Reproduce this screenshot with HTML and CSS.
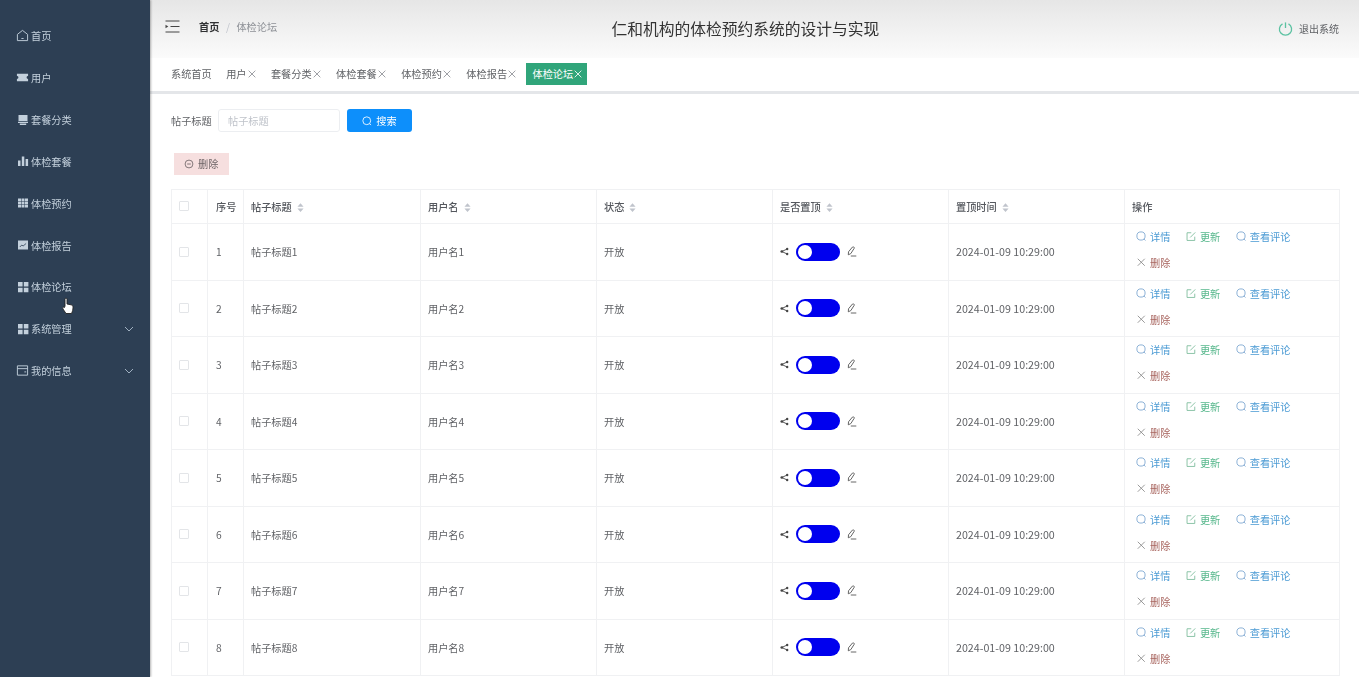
FILE: index.html
```html
<!DOCTYPE html>
<html lang="zh-CN">
<head>
<meta charset="utf-8">
<title>仁和机构的体检预约系统的设计与实现</title>
<link rel="stylesheet" href="styles.css">
</head>
<body>
<svg class="defs" aria-hidden="true">
<symbol id="i-search" viewBox="0 0 12 12"><circle cx="5.7" cy="5.7" r="4.700" fill="none" stroke="currentColor"/><path d="M9 9.100l1.800 1.800" stroke="currentColor" fill="none"/></symbol>
<symbol id="i-edit" viewBox="0 0 12 12"><path d="M10 6.500v4.300H1.200V2H6" fill="none" stroke="currentColor"/><path d="M4.800 7.400L10.600 1.600" stroke="currentColor" fill="none"/></symbol>
<symbol id="i-x" viewBox="0 0 12 12"><path d="M2 2l8 8M10 2l-8 8" stroke="currentColor" fill="none"/></symbol>
<symbol id="i-sort" viewBox="0 0 8 10"><path d="M4 0l3.500 4H.5zM4 10L.5 6h7z" fill="currentColor"/></symbol>
<symbol id="i-share" viewBox="0 0 10 10"><circle cx="2" cy="5" r="1.500" fill="currentColor"/><circle cx="8" cy="2.200" r="1.300" fill="currentColor"/><circle cx="8" cy="7.800" r="1.300" fill="currentColor"/><path d="M2 5l6-2.800M2 5l6 2.800" stroke="currentColor" fill="none"/></symbol>
<symbol id="i-pen" viewBox="0 0 10 11"><path d="M1.300 8.800l.2-3L5.500 1c.7-.7 2.200.4 1.700 1.300L3.800 7.600zM3.800 10h5.500" fill="none" stroke="currentColor" stroke-width=".9"/></symbol>
<symbol id="i-chev" viewBox="0 0 10 10"><path d="M1 3l4 4 4-4" fill="none" stroke="currentColor"/></symbol>
<symbol id="i-four" viewBox="0 0 12 12"><path d="M1 1h4.600v4.500H1zM6.800 1h4.600v4.500H6.800zM1 6.700h4.600v4.500H1zM6.800 6.700h4.600v4.500H6.800z" fill="currentColor"/></symbol>
</svg>

<aside class="side">
  <nav class="menu">
    <a class="item"><svg class="ic ic-l" viewBox="0 0 14 14"><path d="M1.500 5.800L7 1.500l5.500 4.300v6.700h-11zM5.800 10.200h2.400" fill="none" stroke="currentColor"/></svg>首页</a>
    <a class="item"><svg class="ic ic-l" viewBox="0 0 14 14"><path d="M1 3h12v2.500a1.600 1.600 0 000 3.200V11H1V8.700a1.600 1.600 0 000-3.200z" fill="currentColor"/></svg>用户</a>
    <a class="item"><svg class="ic" viewBox="0 0 12 12"><path d="M1.500 1h9v6h-9zM1 7.800h10v1.200H1zM2.800 9.600h6.400V11H2.800z" fill="currentColor"/></svg>套餐分类</a>
    <a class="item"><svg class="ic" viewBox="0 0 12 12"><path d="M1 5.500h2.500V11H1zM4.800 1.500h2.500V11H4.800zM8.600 4h2.500v7H8.600z" fill="currentColor"/></svg>体检套餐</a>
    <a class="item"><svg class="ic" viewBox="0 0 12 12"><path d="M1 1.500h3v2.700H1zM4.500 1.500h3v2.700h-3zM8 1.500h3v2.700H8zM1 4.700h3v2.600H1zM4.500 4.700h3v2.600h-3zM8 4.700h3v2.600H8zM1 7.800h3v2.700H1zM4.500 7.800h3v2.700h-3zM8 7.800h3v2.700H8z" fill="currentColor"/></svg>体检预约</a>
    <a class="item"><svg class="ic" viewBox="0 0 12 12"><path d="M1 1.500h10v9H1z" fill="currentColor"/><path d="M2.800 8l2-2 1.300 1 3-2.500" fill="none" stroke="#2d3f54" stroke-width=".8"/></svg>体检报告</a>
    <a class="item"><svg class="ic"><use href="#i-four"/></svg>体检论坛</a>
    <a class="item"><svg class="ic"><use href="#i-four"/></svg>系统管理<svg class="chev"><use href="#i-chev"/></svg></a>
    <a class="item"><svg class="ic ic-l" viewBox="0 0 14 14"><path d="M1.500 2h11v10h-11zM1.500 5h11M9 8.500h2" fill="none" stroke="currentColor"/></svg>我的信息<svg class="chev"><use href="#i-chev"/></svg></a>
  </nav>
  <svg class="cursor" viewBox="0 0 13 18"><path d="M4 9V2.300c0-1.500 2-1.500 2 0V7l4 .8c1.500.4 2 1 2 2.500 0 2.500-.5 4-1.500 6.200H5L2 12c-1-1.500.5-2.500 1.500-1.500z" fill="#fff" stroke="#222" stroke-width=".9"/></svg>
</aside>

<main class="main">
  <header class="top">
    <svg class="fold" viewBox="0 0 15 13"><path d="M.5 1h14M5.500 6.500h9M.5 12h14" stroke="#444" fill="none"/><path d="M.5 4.800l2.800 1.700-2.800 1.700z" fill="#444"/></svg>
    <div class="crumbs"><b>首页</b><span class="sep">/</span><span class="here">体检论坛</span></div>
    <h1 class="title">仁和机构的体检预约系统的设计与实现</h1>
    <div class="logout"><svg class="power" viewBox="0 0 16 16"><path d="M4.800 3a6.500 6.500 0 106.400 0" fill="none" stroke="#5cc2a2" stroke-width="1.400"/><path d="M8 1.500v6" stroke="#5cc2a2" stroke-width="1.400"/></svg>退出系统</div>
  </header>

  <div class="tabs">
    <span class="tab">系统首页</span>
    <span class="tab">用户<svg class="tx"><use href="#i-x"/></svg></span>
    <span class="tab">套餐分类<svg class="tx"><use href="#i-x"/></svg></span>
    <span class="tab">体检套餐<svg class="tx"><use href="#i-x"/></svg></span>
    <span class="tab">体检预约<svg class="tx"><use href="#i-x"/></svg></span>
    <span class="tab">体检报告<svg class="tx"><use href="#i-x"/></svg></span>
    <span class="tab on">体检论坛<svg class="tx"><use href="#i-x"/></svg></span>
  </div>

  <section class="content">
    <form class="search">
      <label class="lbl">帖子标题</label>
      <span class="input">帖子标题</span>
      <button class="btn-search" type="button"><svg class="bi"><use href="#i-search"/></svg>搜索</button>
    </form>
    <button class="btn-del" type="button"><svg class="bi" viewBox="0 0 12 12"><circle cx="6" cy="6" r="4.700" fill="none" stroke="currentColor"/><path d="M3.800 6h4.400" stroke="currentColor"/></svg>删除</button>

    <table class="grid">
      <colgroup><col class="c1"><col class="c2"><col class="c3"><col class="c4"><col class="c5"><col class="c6"><col class="c7"><col class="c8"></colgroup>
      <thead>
        <tr>
          <th class="mid"><i class="check"></i></th><th class="num">序号</th>
          <th>帖子标题<svg class="sort"><use href="#i-sort"/></svg></th>
          <th>用户名<svg class="sort"><use href="#i-sort"/></svg></th>
          <th>状态<svg class="sort"><use href="#i-sort"/></svg></th>
          <th>是否置顶<svg class="sort"><use href="#i-sort"/></svg></th>
          <th>置顶时间<svg class="sort"><use href="#i-sort"/></svg></th>
          <th>操作</th>
        </tr>
      </thead>
      <tbody>
        <tr><td class="mid"><i class="check"></i></td><td class="num">1</td><td>帖子标题1</td><td>用户名1</td><td>开放</td><td><div class="pin"><svg class="share"><use href="#i-share"/></svg><span class="switch"></span><svg class="pen"><use href="#i-pen"/></svg></div></td><td class="time">2024-01-09 10:29:00</td><td class="ops"><div class="oprow"><a class="op blue"><svg class="oi"><use href="#i-search"/></svg>详情</a><a class="op green"><svg class="oi"><use href="#i-edit"/></svg>更新</a><a class="op blue"><svg class="oi"><use href="#i-search"/></svg>查看评论</a></div><div class="oprow"><a class="op red"><svg class="oi"><use href="#i-x"/></svg>删除</a></div></td></tr>
        <tr><td class="mid"><i class="check"></i></td><td class="num">2</td><td>帖子标题2</td><td>用户名2</td><td>开放</td><td><div class="pin"><svg class="share"><use href="#i-share"/></svg><span class="switch"></span><svg class="pen"><use href="#i-pen"/></svg></div></td><td class="time">2024-01-09 10:29:00</td><td class="ops"><div class="oprow"><a class="op blue"><svg class="oi"><use href="#i-search"/></svg>详情</a><a class="op green"><svg class="oi"><use href="#i-edit"/></svg>更新</a><a class="op blue"><svg class="oi"><use href="#i-search"/></svg>查看评论</a></div><div class="oprow"><a class="op red"><svg class="oi"><use href="#i-x"/></svg>删除</a></div></td></tr>
        <tr><td class="mid"><i class="check"></i></td><td class="num">3</td><td>帖子标题3</td><td>用户名3</td><td>开放</td><td><div class="pin"><svg class="share"><use href="#i-share"/></svg><span class="switch"></span><svg class="pen"><use href="#i-pen"/></svg></div></td><td class="time">2024-01-09 10:29:00</td><td class="ops"><div class="oprow"><a class="op blue"><svg class="oi"><use href="#i-search"/></svg>详情</a><a class="op green"><svg class="oi"><use href="#i-edit"/></svg>更新</a><a class="op blue"><svg class="oi"><use href="#i-search"/></svg>查看评论</a></div><div class="oprow"><a class="op red"><svg class="oi"><use href="#i-x"/></svg>删除</a></div></td></tr>
        <tr><td class="mid"><i class="check"></i></td><td class="num">4</td><td>帖子标题4</td><td>用户名4</td><td>开放</td><td><div class="pin"><svg class="share"><use href="#i-share"/></svg><span class="switch"></span><svg class="pen"><use href="#i-pen"/></svg></div></td><td class="time">2024-01-09 10:29:00</td><td class="ops"><div class="oprow"><a class="op blue"><svg class="oi"><use href="#i-search"/></svg>详情</a><a class="op green"><svg class="oi"><use href="#i-edit"/></svg>更新</a><a class="op blue"><svg class="oi"><use href="#i-search"/></svg>查看评论</a></div><div class="oprow"><a class="op red"><svg class="oi"><use href="#i-x"/></svg>删除</a></div></td></tr>
        <tr><td class="mid"><i class="check"></i></td><td class="num">5</td><td>帖子标题5</td><td>用户名5</td><td>开放</td><td><div class="pin"><svg class="share"><use href="#i-share"/></svg><span class="switch"></span><svg class="pen"><use href="#i-pen"/></svg></div></td><td class="time">2024-01-09 10:29:00</td><td class="ops"><div class="oprow"><a class="op blue"><svg class="oi"><use href="#i-search"/></svg>详情</a><a class="op green"><svg class="oi"><use href="#i-edit"/></svg>更新</a><a class="op blue"><svg class="oi"><use href="#i-search"/></svg>查看评论</a></div><div class="oprow"><a class="op red"><svg class="oi"><use href="#i-x"/></svg>删除</a></div></td></tr>
        <tr><td class="mid"><i class="check"></i></td><td class="num">6</td><td>帖子标题6</td><td>用户名6</td><td>开放</td><td><div class="pin"><svg class="share"><use href="#i-share"/></svg><span class="switch"></span><svg class="pen"><use href="#i-pen"/></svg></div></td><td class="time">2024-01-09 10:29:00</td><td class="ops"><div class="oprow"><a class="op blue"><svg class="oi"><use href="#i-search"/></svg>详情</a><a class="op green"><svg class="oi"><use href="#i-edit"/></svg>更新</a><a class="op blue"><svg class="oi"><use href="#i-search"/></svg>查看评论</a></div><div class="oprow"><a class="op red"><svg class="oi"><use href="#i-x"/></svg>删除</a></div></td></tr>
        <tr><td class="mid"><i class="check"></i></td><td class="num">7</td><td>帖子标题7</td><td>用户名7</td><td>开放</td><td><div class="pin"><svg class="share"><use href="#i-share"/></svg><span class="switch"></span><svg class="pen"><use href="#i-pen"/></svg></div></td><td class="time">2024-01-09 10:29:00</td><td class="ops"><div class="oprow"><a class="op blue"><svg class="oi"><use href="#i-search"/></svg>详情</a><a class="op green"><svg class="oi"><use href="#i-edit"/></svg>更新</a><a class="op blue"><svg class="oi"><use href="#i-search"/></svg>查看评论</a></div><div class="oprow"><a class="op red"><svg class="oi"><use href="#i-x"/></svg>删除</a></div></td></tr>
        <tr><td class="mid"><i class="check"></i></td><td class="num">8</td><td>帖子标题8</td><td>用户名8</td><td>开放</td><td><div class="pin"><svg class="share"><use href="#i-share"/></svg><span class="switch"></span><svg class="pen"><use href="#i-pen"/></svg></div></td><td class="time">2024-01-09 10:29:00</td><td class="ops"><div class="oprow"><a class="op blue"><svg class="oi"><use href="#i-search"/></svg>详情</a><a class="op green"><svg class="oi"><use href="#i-edit"/></svg>更新</a><a class="op blue"><svg class="oi"><use href="#i-search"/></svg>查看评论</a></div><div class="oprow"><a class="op red"><svg class="oi"><use href="#i-x"/></svg>删除</a></div></td></tr>
      </tbody>
    </table>
  </section>
</main>
</body>
</html>
```

FILE: styles.css
```css
* { box-sizing: border-box; }
html, body { height: 100%; }
body {
  margin: 0;
  display: flex;
  height: 677px;
  overflow: hidden;
  background: #fff;
  color: #606266;
  font-family: "Noto Sans CJK SC", "Noto Sans", sans-serif;
  font-size: 10.2px;
}
.defs { display: none; }

.side {
  position: relative;
  flex: 0 0 150px;
  background: #2d3f54;
  color: #c3d0dc;
  box-shadow: 1px 0 2px rgba(0, 0, 0, .3);
  z-index: 2;
  filter: blur(.35px);
}
.menu { display: flex; flex-direction: column; padding-top: 15px; }
.item {
  display: flex;
  align-items: center;
  height: 41.850px;
  padding-left: 17px;
  gap: 2px;
  position: relative;
}
.ic { width: 12px; height: 12px; flex: none; }
.ic-l { width: 13px; height: 13px; margin-left: -1px; }
.chev { width: 10px; height: 10px; position: absolute; right: 16px; top: 16px; color: #9fb0c0; }
.cursor { position: absolute; left: 61px; top: 297px; width: 13px; height: 18px; }

.main { flex: 1; min-width: 0; display: flex; flex-direction: column; filter: blur(.35px); }
.top {
  position: relative;
  display: flex;
  align-items: center;
  height: 58px;
  padding: 0 20px 4px 15px;
  background: linear-gradient(#e6e6e6, #fbfbfb);
}
.fold { width: 15px; height: 13px; margin-top: -1px; }
.crumbs { margin-left: 19px; display: flex; gap: 6.500px; margin-bottom: 2px; }
.crumbs b { color: #303133; font-weight: 700; }
.sep { color: #c0c4cc; }
.here { color: #8d9096; }
.title {
  position: absolute;
  left: 461.500px;
  top: 16px;
  margin: 0;
  font-size: 15.750px;
  line-height: 26px;
  font-weight: 400;
  color: #333;
  white-space: nowrap;
}
.logout { margin-left: auto; display: flex; align-items: center; gap: 6px; color: #606266; font-size: 10px; padding-top: 2px; }
.power { width: 15px; height: 15px; margin-left: -1px; }

.tabs {
  display: flex;
  align-items: center;
  height: 36px;
  padding: 0 0 2px 15px;
  border-bottom: 3px solid #e4e6e9;
  color: #606266;
}
.tab { display: inline-flex; align-items: center; height: 22px; padding: 0 6px; margin-right: 2.400px; white-space: nowrap; }
.tab.on { background: #30a57a; color: #fff; margin-left: 1px; padding-right: 4px; }
.tx { width: 10px; height: 10px; color: #8b8e94; }
.on .tx { color: #fff; }

.content { flex: 1; padding: 15px 20px 0 21px; min-height: 0; }
.search { display: flex; align-items: center; height: 23px; }
.lbl { width: 47px; color: #606266; }
.input {
  width: 122px;
  height: 23px;
  line-height: 21px;
  padding-left: 9px;
  border: 1px solid #eceef1;
  border-radius: 3px;
  color: #bfc3ca;
}
.btn-search {
  margin-left: 7px;
  width: 65px;
  height: 23px;
  border: 0;
  border-radius: 3px;
  background: #0d8ffb;
  color: #fff;
  font: inherit;
  display: flex;
  align-items: center;
  justify-content: center;
  gap: 4px;
  padding: 0;
}
.bi { width: 10px; height: 10px; }
.btn-del {
  margin: 20.500px 0 13.500px 3px;
  width: 54.500px;
  height: 22.500px;
  border: 0;
  background: #f6dfdf;
  color: #6d6466;
  font: inherit;
  display: flex;
  align-items: center;
  justify-content: center;
  gap: 4px;
  padding: 0;
}
.grid { width: 1168px; table-layout: fixed; border-collapse: collapse; color: #606266; }
.c1 { width: 36px; } .c2 { width: 36px; } .c3 { width: 177px; } .c4 { width: 176px; }
.c5 { width: 176px; } .c6 { width: 176px; } .c7 { width: 176px; } .c8 { width: 215px; }
.grid th, .grid td { border: 1px solid #f0f1f3; padding: 0 7px; text-align: left; white-space: nowrap; }
.grid th { height: 34px; font-weight: 500; color: #55585e; }
.grid td { height: 56px; }
.grid tbody tr:nth-child(odd) td { height: 57px; }
.grid .mid { padding-left: 7px; }
.grid .num { padding-left: 8px; }
.grid .time { font-size: 10.700px; }
.check { display: block; width: 10px; height: 10px; border: 1px solid #e3e5e8; border-radius: 1px; }
.sort { width: 7px; height: 9px; margin-left: 5px; color: #c0c4cc; vertical-align: -1.500px; }
.pin { display: flex; align-items: center; }
.share { width: 9px; height: 9px; color: #444; }
.switch {
  position: relative;
  width: 44px;
  height: 18px;
  margin-left: 7px;
  background: #0000ee;
  border-radius: 9px;
}
.switch::after {
  content: "";
  position: absolute;
  left: 2px;
  top: 2px;
  width: 14px;
  height: 14px;
  border-radius: 50%;
  background: #fff;
}
.pen { width: 10px; height: 11px; margin-left: 7px; color: #555; }
.grid .ops { padding: 0 0 0 11px; vertical-align: top; }
.oprow { display: flex; gap: 15.500px; height: 26px; align-items: center; }
.op { display: inline-flex; align-items: center; gap: 3.500px; }
.oi { width: 10.500px; height: 10.500px; }
.blue { color: #4a9ad4; }
.blue .oi { color: #7ba6d0; }
.green { color: #58b88d; }
.green .oi { color: #7dbb9c; }
.red { color: #a8655f; }
.red .oi { color: #8c8c8c; }
```
